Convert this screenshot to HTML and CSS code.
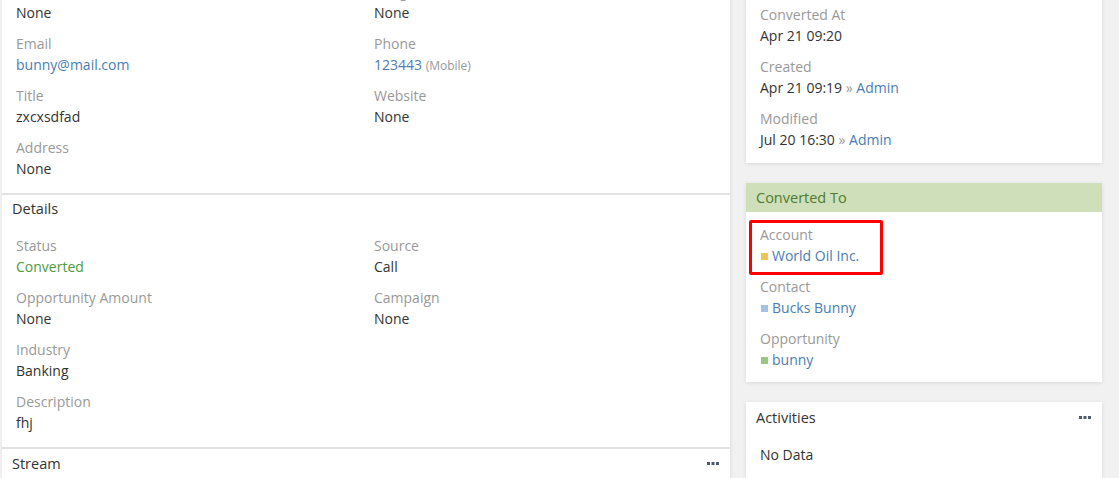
FILE: index.html
```html
<!DOCTYPE html>
<html lang="en">
<head>
    <meta charset="UTF-8">
    <title>Lead · Bucks Bunny</title>
    <link rel="stylesheet" href="styles.css">
</head>
<body>
    <div class="page">
        <div class="main">
            <div class="panel">
                <div class="grid first">
                    <div class="cell">
                        <div class="label">Account Name</div>
                        <div class="value">None</div>
                    </div>
                    <div class="cell">
                        <div class="label">Assigned User</div>
                        <div class="value">None</div>
                    </div>
                    <div class="cell">
                        <div class="label">Email</div>
                        <div class="value"><a href="#">bunny@mail.com</a></div>
                    </div>
                    <div class="cell">
                        <div class="label">Phone</div>
                        <div class="value"><a href="#">123443</a> <span class="small">(Mobile)</span></div>
                    </div>
                    <div class="cell">
                        <div class="label">Title</div>
                        <div class="value">zxcxsdfad</div>
                    </div>
                    <div class="cell">
                        <div class="label">Website</div>
                        <div class="value">None</div>
                    </div>
                    <div class="cell">
                        <div class="label">Address</div>
                        <div class="value">None</div>
                    </div>
                </div>

                <div class="heading details-head">Details</div>
                <div class="grid">
                    <div class="cell">
                        <div class="label">Status</div>
                        <div class="value green">Converted</div>
                    </div>
                    <div class="cell">
                        <div class="label">Source</div>
                        <div class="value">Call</div>
                    </div>
                    <div class="cell">
                        <div class="label">Opportunity Amount</div>
                        <div class="value">None</div>
                    </div>
                    <div class="cell">
                        <div class="label">Campaign</div>
                        <div class="value">None</div>
                    </div>
                    <div class="cell">
                        <div class="label">Industry</div>
                        <div class="value">Banking</div>
                    </div>
                    <div class="cell"></div>
                    <div class="cell">
                        <div class="label">Description</div>
                        <div class="value">fhj</div>
                    </div>
                </div>

                <div class="heading stream-head">
                    <span>Stream</span>
                    <span class="dots"><svg width="12" height="3" viewBox="0 0 12 3"><rect x="0" y="0" width="3" height="3"/><rect x="4.5" y="0" width="3" height="3"/><rect x="9" y="0" width="3" height="3"/></svg></span>
                </div>
            </div>
        </div>

        <div class="side">
            <div class="card top-card">
                <div class="card-body">
                    <div class="cell">
                        <div class="label">Converted At</div>
                        <div class="value">Apr 21 09:20</div>
                    </div>
                    <div class="cell">
                        <div class="label">Created</div>
                        <div class="value">Apr 21 09:19 <span class="raquo">&raquo;</span> <a href="#">Admin</a></div>
                    </div>
                    <div class="cell">
                        <div class="label">Modified</div>
                        <div class="value">Jul 20 16:30 <span class="raquo">&raquo;</span> <a href="#">Admin</a></div>
                    </div>
                </div>
            </div>

            <div class="card converted">
                <div class="card-heading green-head">Converted To</div>
                <div class="card-body">
                    <div class="cell">
                        <div class="label">Account</div>
                        <div class="value"><span class="sq sq-account"></span><a href="#">World Oil Inc.</a></div>
                    </div>
                    <div class="cell">
                        <div class="label">Contact</div>
                        <div class="value"><span class="sq sq-contact"></span><a href="#">Bucks Bunny</a></div>
                    </div>
                    <div class="cell">
                        <div class="label">Opportunity</div>
                        <div class="value"><span class="sq sq-opp"></span><a href="#">bunny</a></div>
                    </div>
                </div>
                <div class="highlight"></div>
            </div>

            <div class="card">
                <div class="card-heading">
                    <span>Activities</span>
                    <span class="dots"><svg width="12" height="3" viewBox="0 0 12 3"><rect x="0" y="0" width="3" height="3"/><rect x="4.5" y="0" width="3" height="3"/><rect x="9" y="0" width="3" height="3"/></svg></span>
                </div>
                <div class="card-body act-body">
                    <div class="value">No Data</div>
                </div>
            </div>
        </div>
    </div>
</body>
</html>
```

FILE: styles.css
```css
* {
    margin: 0;
    padding: 0;
    box-sizing: border-box;
}
body {
    background: #f1f1f1;
    font-family: "Open Sans", "Liberation Sans", sans-serif;
    font-size: 14px;
    color: #333;
    overflow: hidden;
}
a {
    color: #4a7db4;
    text-decoration: none;
}
.page {
    display: flex;
    gap: 16px;
    padding-left: 2px;
    width: 1102px;
}
.main {
    flex: 1;
    margin-top: -29px;
}
.panel {
    background: #fff;
    box-shadow: 1px 0 3px rgba(0, 0, 0, 0.08);
}
.grid {
    display: grid;
    grid-template-columns: 358px 1fr;
    row-gap: 10px;
    padding: 10px 14px 14px;
}
.label {
    color: #999;
    height: 21px;
    line-height: 21px;
}
.value {
    height: 21px;
    line-height: 21px;
}
.green {
    color: #4c9a3c;
}
.small {
    font-size: 12px;
    line-height: 1;
    color: #999;
}
.heading {
    display: flex;
    justify-content: space-between;
    align-items: center;
    border-top: 2px solid #e2e2e2;
    height: 32px;
    padding: 0 11px 0 10px;
    font-size: 14.5px;
}
.details-head {
    padding-bottom: 4px;
}
.stream-head {
    padding-bottom: 2px;
}
.dots svg {
    display: block;
    fill: #4d5a6c;
}
.side {
    width: 356px;
    display: flex;
    flex-direction: column;
    gap: 20px;
}
.card {
    position: relative;
    background: #fff;
    box-shadow: 0 1px 4px rgba(0, 0, 0, 0.1);
}
.top-card {
    margin-top: -8px;
}
.card-body {
    display: flex;
    flex-direction: column;
    gap: 10px;
    padding: 11.5px 14px 13.5px;
}
.card-heading {
    display: flex;
    justify-content: space-between;
    align-items: center;
    height: 30px;
    padding: 0 11px 0 10px;
    font-size: 14.5px;
}
.green-head {
    height: 29px;
    background: #cfdfba;
    color: #4e7b2d;
}
.converted .card-body {
    padding-top: 11.5px;
    padding-bottom: 12.5px;
}
.act-body {
    padding-top: 11.5px;
}
.raquo {
    color: #999;
}
.sq {
    display: inline-block;
    width: 7px;
    height: 7px;
    margin: 0 4px 1px 1px;
}
.sq-account {
    background: #ecc65a;
}
.sq-contact {
    background: #a2c4e0;
}
.sq-opp {
    background: #9cc57f;
}
.highlight {
    position: absolute;
    left: 3px;
    top: 37px;
    width: 134px;
    height: 55px;
    border: 3px solid #f00;
    border-radius: 2px;
}
```
